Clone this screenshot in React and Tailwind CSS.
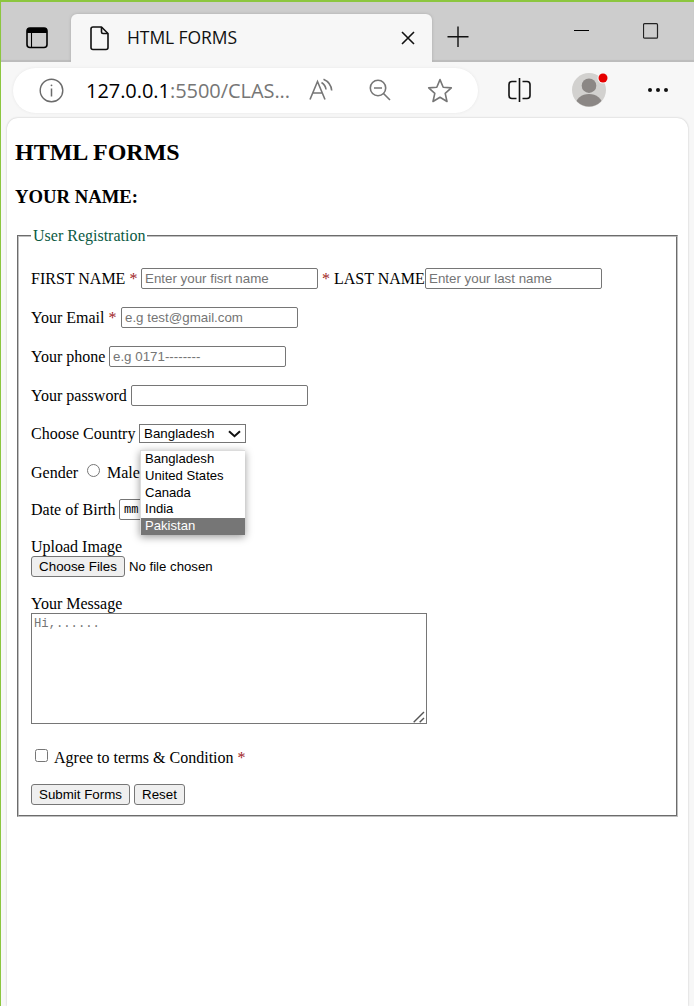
import React from "react";

const field =
  "box-border h-[21px] w-[177px] rounded-[2px] border border-[#767676] bg-white px-[3px] font-['Liberation_Sans',Arial,sans-serif] text-[13.333px] leading-[15px] placeholder:text-[#757575] outline-none";
const button =
  "box-border h-[21px] shrink-0 rounded-[3px] border border-[#767676] bg-[#efefef] text-center font-['Liberation_Sans',Arial,sans-serif] text-[13.333px] leading-[18px] text-black";

function Star() {
  return <span className="text-[#a01c24]">*</span>;
}

function TitleBar() {
  return (
    <div className="flex h-[60px] bg-[#cdcdcd] shadow-[inset_0_-2px_1px_#bcbcbc]">
      <div className="flex w-[70px] shrink-0 rounded-br-[5px] pl-[25px] pt-[25px]">
        <svg width="22" height="22" viewBox="0 0 22 22" fill="none">
          <rect x="1" y="1" width="20" height="19.5" rx="3" stroke="#000" strokeWidth="1.6" />
          <path d="M1 6V4a3 3 0 0 1 3-3h14a3 3 0 0 1 3 3v2z" fill="#000" />
          <path d="M5.5 6v14.5" stroke="#000" strokeWidth="1.1" />
        </svg>
      </div>
      <div className="relative mt-[12px] flex h-[48px] w-[361px] shrink-0 rounded-t-[6px] bg-[#f7f7f7] shadow-[0_0_3px_#aaa] [clip-path:inset(-4px_-4px_0_-4px)]">
        <svg className="ml-[19px] mt-[12px] shrink-0" width="20" height="25" viewBox="0 0 20 25" fill="none" stroke="#111" strokeWidth="1.6" strokeLinejoin="round">
          <path d="M3 1h8.500l6.500 6.500V21.500a2 2 0 0 1-2 2H3a2 2 0 0 1-2-2V3a2 2 0 0 1 2-2z" />
          <path d="M11.500 1v5a1.500 1.500 0 0 0 1.500 1.500h5" />
        </svg>
        <span className="ml-[17px] mt-[10px] w-[274px] shrink-0 font-['Open_Sans','Noto_Sans',sans-serif] text-[17.5px] leading-[26px] tracking-[-0.08px] text-[#111]">
          HTML FORMS
        </span>
        <svg className="mt-[17px] shrink-0" width="14" height="14" viewBox="0 0 14 14" stroke="#111" strokeWidth="1.6">
          <path d="M1 1l12 12M13 1L1 13" />
        </svg>
      </div>
      <svg className="ml-[15px] mt-[24px] shrink-0" width="22" height="22" viewBox="0 0 22 22" stroke="#111" strokeWidth="1.4">
        <path d="M.5 10.700h21M11 .5v20.500" />
      </svg>
      <svg className="ml-[104px] mt-[21px] shrink-0" width="17" height="15" viewBox="0 0 17 15" stroke="#000">
        <path d="M1 7.500h15" />
      </svg>
      <svg className="ml-[53px] mt-[21px] shrink-0" width="16" height="17" viewBox="0 0 16 17" fill="none" stroke="#222">
        <rect x=".5" y=".7" width="14" height="14.500" rx="1" strokeWidth="1.2" />
      </svg>
    </div>
  );
}

function Toolbar() {
  return (
    <div className="flex h-[56px] bg-[#f7f7f7] pl-[12px] pt-[6px]">
      <div className="flex h-[45px] w-[465px] shrink-0 rounded-full bg-white shadow-[0_0_3px_#e6e6e6]">
        <svg className="ml-[26px] mt-[10px] shrink-0" width="25" height="25" viewBox="0 0 25 25" fill="none" stroke="#6b6b6b">
          <circle cx="12.500" cy="12.500" r="11.300" strokeWidth="1.4" />
          <path d="M12.500 10.500v8" strokeWidth="1.5" />
          <circle cx="12.500" cy="7.300" r=".9" fill="#6b6b6b" stroke="none" />
        </svg>
        <div className="ml-[22px] mt-[9px] w-[216px] shrink-0 whitespace-nowrap font-['Open_Sans','Noto_Sans',sans-serif] text-[20px] leading-[28px] tracking-[-0.05px] text-[#767676]">
          <span className="text-black">127.0.0.1</span>:5500/CLAS...
        </div>
        <svg className="ml-[7px] mt-[10px] shrink-0" width="24" height="24" viewBox="0 0 24 24" fill="none" stroke="#767676" strokeWidth="1.6">
          <path d="M1 21.500L8.500 3.500L16 21.500M3.700 15h9.600" />
          <path d="M12.500 4.500q4 2.500 4.500 7M14.500 1.200q7.500 3.300 8.200 11.300" />
        </svg>
        <svg className="ml-[36px] mt-[11px] shrink-0" width="23" height="23" viewBox="0 0 23 23" fill="none" stroke="#767676" strokeWidth="1.6">
          <circle cx="9" cy="9" r="7.700" />
          <path d="M5 9h8M14.500 14.500l6.500 6.500" />
        </svg>
        <svg className="ml-[35px] mt-[10px] shrink-0" width="26" height="26" viewBox="0 0 26 26" fill="none" stroke="#767676" strokeWidth="1.6" strokeLinejoin="round">
          <path d="M13 1.600L16.200 9.200L24.300 9.900L18.200 15.300L20 23.500L13 19.200L6 23.500L7.800 15.300L1.700 9.900L9.800 9.200Z" />
        </svg>
      </div>
      <svg className="ml-[29px] mt-[10px] shrink-0" width="25" height="25" viewBox="0 0 25 25" fill="none" stroke="#111" strokeWidth="1.6">
        <path d="M12.500 0v24M9.500 3.500H5a3 3 0 0 0-3 3v11a3 3 0 0 0 3 3h4.500M15.500 3.500H20a3 3 0 0 1 3 3v11a3 3 0 0 1-3 3h-4.500" />
      </svg>
      <svg className="ml-[40px] mt-[4px] shrink-0" width="38" height="36" viewBox="0 0 38 36">
        <defs>
          <clipPath id="avatar">
            <circle cx="17" cy="18" r="16.500" />
          </clipPath>
        </defs>
        <circle cx="17" cy="18" r="17" fill="#d2d1cf" />
        <g clipPath="url(#avatar)" fill="#8b8785">
          <circle cx="17" cy="13.700" r="7.300" />
          <ellipse cx="17" cy="33" rx="13.500" ry="11" />
        </g>
        <circle cx="31" cy="6" r="5.500" fill="#f7f7f7" />
        <circle cx="31" cy="6" r="4.500" fill="#e60000" />
      </svg>
      <svg className="ml-[38px] mt-[20px] shrink-0" width="20" height="5" viewBox="0 0 20 5" fill="#111">
        <circle cx="2" cy="2" r="2" />
        <circle cx="10" cy="2" r="2" />
        <circle cx="18" cy="2" r="2" />
      </svg>
    </div>
  );
}

function Form() {
  return (
    <fieldset className="ml-[10px] mt-[19px] h-[590px] w-[661px] border-2 border-[#c0c0c0] pl-[12px] [border-style:groove]">
      <legend className="h-[18px] px-[2px] text-[#0b5a43]">User Registration</legend>
      <div className="mt-[23px] flex h-[21px] items-center">
        <span className="w-[110px]">FIRST NAME <Star /></span>
        <input className={field} placeholder="Enter your fisrt name" />
        <span className="ml-[4px] w-[103px] whitespace-nowrap"><Star /> LAST NAME</span>
        <input className={field} placeholder="Enter your last name" />
      </div>
      <div className="mt-[18px] flex h-[21px] items-center">
        <span className="w-[90px]">Your Email <Star /></span>
        <input className={field} placeholder="e.g test@gmail.com" />
      </div>
      <div className="mt-[18px] flex h-[21px] items-center">
        <span className="w-[78px]">Your phone</span>
        <input className={field} placeholder="e.g 0171--------" />
      </div>
      <div className="mt-[18px] flex h-[21px] items-center">
        <span className="w-[100px]">Your password</span>
        <input type="password" className={field} />
      </div>
      <div className="mt-[18px] flex h-[19px] items-center">
        <span className="w-[108px]">Choose Country</span>
        <div className="relative flex h-[19px] w-[107px] items-center justify-between border border-[#767676] bg-white pl-[4px] pr-[4px] font-['Liberation_Sans',Arial,sans-serif] text-[13.333px] leading-[17px]">
          Bangladesh
          <svg width="13" height="8" viewBox="0 0 13 8" fill="none" stroke="#111" strokeWidth="2">
            <path d="M1 1.200l5.500 5L12 1.200" />
          </svg>
          <div className="absolute left-0 top-[25px] z-10 h-[85px] w-[105px] border-l border-t border-[#dcdcdc] bg-white text-[13.1px] shadow-[0_2px_8px_rgba(0,0,0,0.4)]">
            {["Bangladesh", "United States", "Canada", "India"].map((name) => (
              <div key={name} className="h-[16.6px] pl-[4px] leading-[16px]">{name}</div>
            ))}
            <div className="h-[17px] bg-[#767676] pl-[4px] leading-[16px] text-white">Pakistan</div>
          </div>
        </div>
      </div>
      <div className="mt-[20px] flex h-[18px] items-center">
        <span className="w-[56px] pt-[1px]">Gender</span>
        <input type="radio" className="mb-[3px] h-[13px] w-[13px]" />
        <span className="ml-[7px] pt-[1px]">Male</span>
      </div>
      <div className="mt-[18px] flex h-[21px] items-center">
        <span className="w-[88px]">Date of Birth</span>
        <div className="h-[21px] w-[110px] rounded-[2px] border border-[#767676] bg-white pl-[4px] font-['Liberation_Mono',monospace] text-[12px] leading-[21px]">
          mm
        </div>
      </div>
      <div className="mt-[18px] h-[18px]">Upload Image</div>
      <div className="flex h-[21px] items-center font-['Liberation_Sans',Arial,sans-serif] text-[13.2px]">
        <button className={button + " w-[94px]"}>Choose Files</button>
        <span className="ml-[4px]">No file chosen</span>
      </div>
      <div className="mt-[18px] h-[18px]">Your Message</div>
      <div className="relative h-[111px] w-[396px]">
        <textarea
          className="block h-[111px] w-[396px] resize-none border border-[#767676] bg-white p-[2px] font-['Liberation_Mono',monospace] text-[12.2px] leading-[17px] placeholder:text-[#757575]"
          placeholder="Hi,......"
        />
        <svg className="absolute bottom-[1px] right-[2px]" width="12" height="12" viewBox="0 0 12 12" stroke="#555" strokeWidth="1.4">
          <path d="M.7 11.300L11 1M6.700 11.300L11 7" />
        </svg>
      </div>
      <div className="mt-[24px] flex h-[18px] items-center">
        <input type="checkbox" className="mb-[3px] ml-[4px] h-[13px] w-[13px]" />
        <span className="ml-[6px] pt-[1px]">Agree to terms &amp; Condition <Star /></span>
      </div>
      <div className="mt-[18px] flex h-[21px] gap-[4px]">
        <button className={button + " w-[99px]"}>Submit Forms</button>
        <button className={button + " w-[51px]"}>Reset</button>
      </div>
    </fieldset>
  );
}

export default function App() {
  return (
    <div className="flex h-[1006px] w-[694px] flex-col overflow-hidden border-l border-t-2 border-[#8cc63f] bg-[#f7f7f7]">
      <TitleBar />
      <Toolbar />
      <main className="ml-[6px] mt-[1px] h-[900px] w-[681px] rounded-t-[11px] bg-white font-['Liberation_Serif','Times_New_Roman',serif] text-[16px] leading-[18px] text-black shadow-[0_0_2px_#bbb]">
        <h1 className="pl-[8px] pt-[20px] text-[24px] font-bold leading-[28px]">HTML FORMS</h1>
        <h2 className="mt-[20px] pl-[8px] text-[18.7px] font-bold leading-[22px]">YOUR NAME:</h2>
        <Form />
      </main>
    </div>
  );
}
